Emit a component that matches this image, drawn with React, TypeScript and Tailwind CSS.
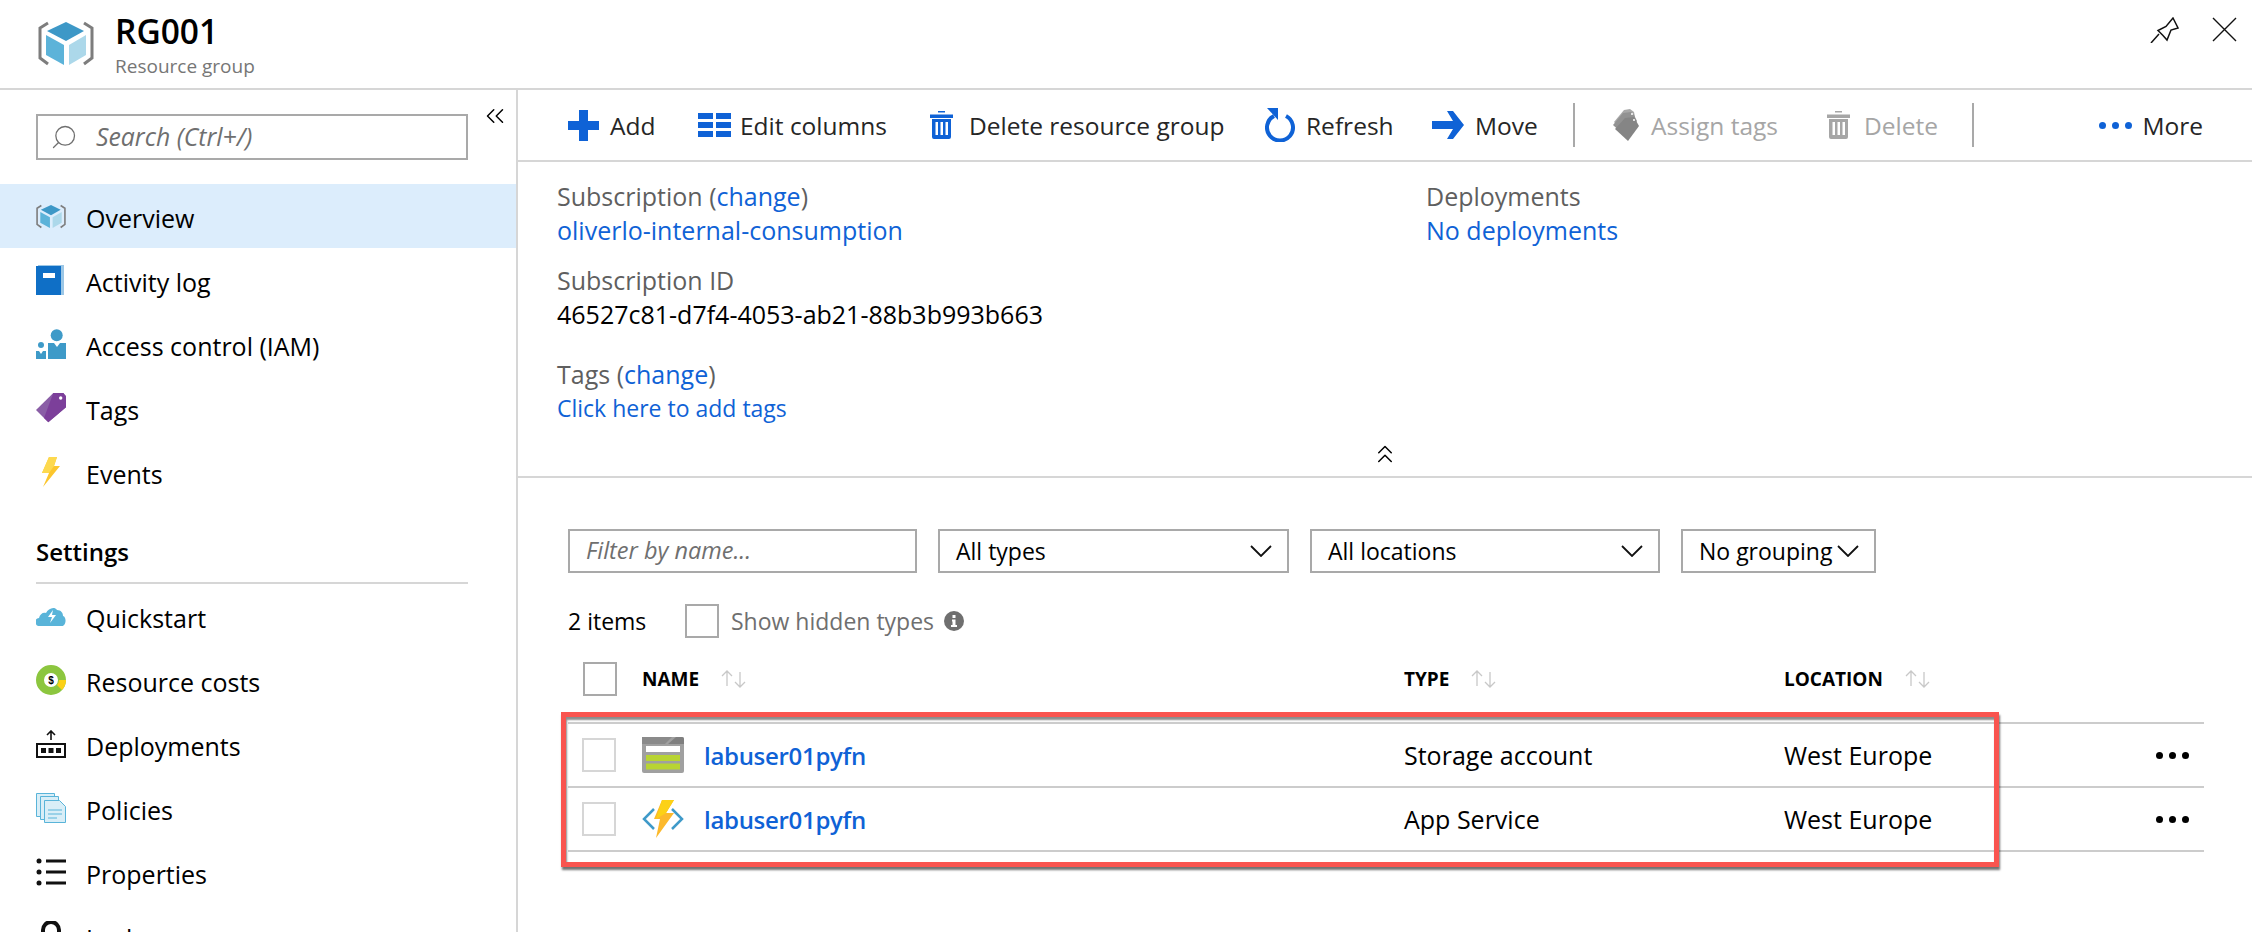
import { ChevronsLeft, ChevronsUp, Search } from "lucide-react";

const FONT = "font-['Open_Sans','Noto_Sans',sans-serif]";

function CubeIcon({ className }: { className: string }) {
  return (
    <svg className={className} viewBox="0 0 56 45">
      <path d="M10 2 2 7v30l8 6M46 2l8 5v30l-8 6" fill="none" stroke="#7d7d7d" strokeWidth="3" />
      <path d="M28 1l18 9-18 10-19-10z" fill="#3d98c7" />
      <path d="M8 14l18 10v20L8 34z" fill="#5cb3d9" />
      <path d="M48 14 31 24v20l17-10z" fill="#acd8ea" />
    </svg>
  );
}

function BookIcon() {
  return (
    <svg className="w-[28px] h-[30px]" viewBox="0 0 28 30">
      <path d="M2 0h26v30H2z" fill="#9cc7e6" />
      <path d="M0 1h25v29H0z" fill="#0f6fc6" />
      <path d="M7 8h12v5H7z" fill="#fff" />
    </svg>
  );
}

function PeopleIcon() {
  return (
    <svg className="w-[30px] h-[30px]" viewBox="0 0 30 30" fill="#3e9ac8">
      <circle cx="20.700" cy="6.300" r="6" />
      <path d="M12 14h6l3 4 3-4h6v16H12z" />
      <circle cx="5" cy="16" r="3" />
      <path d="M0 22h3l2 3 2-3h3v8H0z" />
    </svg>
  );
}

function TagIcon() {
  return (
    <svg className="w-[30px] h-[30px]" viewBox="0 0 30 30">
      <path d="M17.300 0h10l2.700 3.300v11L12.300 29.300 0 17z" fill="#8a5ea6" />
      <path d="M17.300 0h10l2.700 3.300v11L12.300 29.300 8 25z" fill="#7c3f9a" />
      <circle cx="24.700" cy="5" r="1.700" fill="#fff" />
    </svg>
  );
}

function BoltIcon() {
  return (
    <svg className="w-[18px] h-[30px] ml-[6px]" viewBox="0 0 18 30">
      <path d="M7 0h8l-3 9h6L1 30l6-14H0z" fill="#fcc62d" />
      <path d="M7 0h8l-3 9-5 7H0z" fill="#fdd94e" />
    </svg>
  );
}

function CloudIcon() {
  return (
    <svg className="w-[30px] h-[20px]" viewBox="0 0 30 20">
      <path d="M4 20a4 4 0 0 1-1-8c1-4 4-6 7-5 2-4 8-7 11-3 4 0 6 3 6 6 4 1 3 10-1 10z" fill="#59b4d9" />
      <path d="M17 4l-5 7h4l-2 6 6-8h-4z" fill="#fff" />
    </svg>
  );
}

function CostIcon() {
  return (
    <svg className="w-[30px] h-[30px]" viewBox="0 0 30 30">
      <circle cx="15" cy="15" r="11" fill="none" stroke="#8cc63f" strokeWidth="8" />
      <path d="M30 15a15 15 0 0 1-4 10l-5-5a8 8 0 0 0 2-5z" fill="#fcd116" />
      <text x="15" y="19" textAnchor="middle" fontSize="10" fontWeight="700" fontFamily="Liberation Sans">$</text>
    </svg>
  );
}

function DeployIcon() {
  return (
    <svg className="w-[30px] h-[28px]" viewBox="0 0 30 28">
      <path d="M15 10V1M11 5l4-4 4 4" fill="none" stroke="#111" strokeWidth="1.6" />
      <path d="M1 14h28v13H1z" fill="none" stroke="#111" strokeWidth="2" />
      <path d="M5 18h5v5H5zM12.500 18h5v5h-5zM20 18h5v5h-5z" fill="#111" />
    </svg>
  );
}

function PoliciesIcon() {
  return (
    <svg className="w-[30px] h-[30px]" viewBox="0 0 30 30">
      <path d="M.5.500h18v23H.5z" fill="#d9eef7" stroke="#59b4d9" />
      <path d="M4.500 3.500h18v23h-18z" fill="#d9eef7" stroke="#59b4d9" />
      <path d="M8.500 7.500h15l6 6v16h-21z" fill="#d9eef7" stroke="#59b4d9" />
      <path d="M12 17h14M12 21h14M12 25h9" stroke="#59b4d9" />
    </svg>
  );
}

function ListIcon() {
  return (
    <svg className="w-[30px] h-[28px]" viewBox="0 0 30 28">
      <circle cx="3" cy="3" r="2.500" fill="#111" />
      <circle cx="3" cy="14" r="2.500" fill="#111" />
      <circle cx="3" cy="25" r="2.500" fill="#111" />
      <path d="M10 3h20M10 14h20M10 25h20" stroke="#111" strokeWidth="3" />
    </svg>
  );
}

function LockIcon() {
  return (
    <svg className="w-[30px] h-[30px]" viewBox="0 0 30 30">
      <path d="M7 14V9a8 8 0 0 1 16 0v5" fill="none" stroke="#111" strokeWidth="4" />
      <path d="M3 14h24v16H3z" fill="#111" />
    </svg>
  );
}

function TrashIcon({ color }: { color: string }) {
  return (
    <svg className="w-[23px] h-[28px]" viewBox="0 0 23 28" fill={color}>
      <path d="M8 0h7v1.500H8zM0 3.500h23V7H0z" />
      <path d="M2 8h19v18a2 2 0 0 1-2 2H4a2 2 0 0 1-2-2zm3.500 3v13h2.500V11zm5 0v13H13V11zm5 0v13H18V11z" fillRule="evenodd" />
    </svg>
  );
}

const navTop = [
  { label: "Overview", icon: <CubeIcon className="w-[30px] h-[25px]" />, active: true },
  { label: "Activity log", icon: <BookIcon /> },
  { label: "Access control (IAM)", icon: <PeopleIcon /> },
  { label: "Tags", icon: <TagIcon /> },
  { label: "Events", icon: <BoltIcon /> },
];

const navSettings = [
  { label: "Quickstart", icon: <CloudIcon /> },
  { label: "Resource costs", icon: <CostIcon /> },
  { label: "Deployments", icon: <DeployIcon /> },
  { label: "Policies", icon: <PoliciesIcon /> },
  { label: "Properties", icon: <ListIcon /> },
  { label: "Locks", icon: <LockIcon /> },
];

function NavItem({ label, icon, active }: { label: string; icon: React.ReactNode; active?: boolean }) {
  return (
    <div className={`h-[64px] shrink-0 flex items-center pl-[36px] ${active ? "bg-[#dcedfc]" : ""}`}>
      <span className="w-[50px] shrink-0 flex items-center">{icon}</span>
      <span className="text-[25px] text-black pt-[5px]">{label}</span>
    </div>
  );
}

function ToolItem({ label, icon, width, gap, muted }: { label: string; icon: React.ReactNode; width: string; gap: string; muted?: boolean }) {
  return (
    <div className={`flex items-center shrink-0 text-[24.500px] ${width} ${gap} ${muted ? "text-[#a6a6a6]" : "text-[#262626]"}`}>
      {icon}
      <span className="pt-[2px]">{label}</span>
    </div>
  );
}

function Select({ label, width }: { label: string; width: string }) {
  return (
    <div className={`h-[44px] ${width} shrink-0 border-2 border-[#a9a9a9] flex items-center justify-between pl-[16px] pr-[15px] text-[23px] text-black`}>
      <span>{label}</span>
      <svg className="w-[22px] h-[12px] shrink-0" viewBox="0 0 22 12" fill="none" stroke="#111" strokeWidth="1.800">
        <path d="M1 1l10 10L21 1" />
      </svg>
    </div>
  );
}

function SortArrows() {
  return (
    <svg className="w-[26px] h-[18px] ml-[22px]" viewBox="0 0 26 18" fill="none" stroke="#c8c8c8" strokeWidth="1.300">
      <path d="M6 16V1M1 6l5-5 5 5M19 2v15M14 12l5 5 5-5" />
    </svg>
  );
}

function Dots({ color, size, gap }: { color: string; size: string; gap: string }) {
  return (
    <span className={`flex ${gap}`}>
      <span className={`${size} rounded-full ${color}`} />
      <span className={`${size} rounded-full ${color}`} />
      <span className={`${size} rounded-full ${color}`} />
    </span>
  );
}

function Row({ icon, type }: { icon: React.ReactNode; type: string }) {
  return (
    <div className="h-[64px] flex items-center border-b-2 border-[#cccccc]">
      <span className="w-[74px] shrink-0 pl-[14px]">
        <span className="block w-[34px] h-[34px] border-2 border-[#d6d6d6]" />
      </span>
      <span className="w-[62px] shrink-0 flex items-center">{icon}</span>
      <span className="w-[700px] shrink-0 text-[#0f62d6] font-semibold text-[24px] tracking-[-0.3px] pt-[2px]">labuser01pyfn</span>
      <span className="w-[380px] shrink-0 text-black text-[25px] pt-[2px]">{type}</span>
      <span className="flex-1 text-black text-[25px] pt-[2px]">West Europe</span>
      <span className="pr-[15px]">
        <Dots color="bg-black" size="w-[7px] h-[7px]" gap="gap-[6px]" />
      </span>
    </div>
  );
}

export default function App() {
  return (
    <div className={`relative w-[2252px] h-[932px] overflow-hidden bg-white ${FONT}`}>
      <header className="h-[90px] border-b-2 border-[#d6d6d6] flex items-start">
        <div className="pl-[38px] pt-[21px]">
          <CubeIcon className="w-[56px] h-[45px]" />
        </div>
        <div className="pl-[21px] pt-[9px]">
          <h1 className="text-[33.500px] leading-[44px] font-semibold text-black">RG001</h1>
          <p className="text-[19px] leading-[24px] text-[#767676] mt-[1px]">Resource group</p>
        </div>
        <div className="ml-auto flex items-start gap-[33px] pt-[17px] pr-[15px]">
          <svg className="w-[29px] h-[26px]" viewBox="0 0 29 26" fill="none" stroke="#111" strokeWidth="1.500">
            <path d="M1 26l8-9M23 1l5 10-7 2-4 10-4-4.500-5-5 8-4z" />
          </svg>
          <svg className="w-[25px] h-[25px]" viewBox="0 0 25 25" fill="none" stroke="#111" strokeWidth="1.400">
            <path d="M1 1l23 23M24 1L1 24" />
          </svg>
        </div>
      </header>

      <div className="flex h-[842px]">
        <aside className="w-[518px] shrink-0 border-r-2 border-[#d6d6d6] flex flex-col overflow-hidden">
          <div className="relative h-[94px] shrink-0 pt-[24px] pl-[36px]">
            <div className="w-[432px] h-[46px] border-2 border-[#a9a9a9] flex items-center pl-[12px] gap-[18px] text-[#6f6f6f] text-[24.800px] italic">
              <Search className="w-[28px] h-[28px] -scale-x-100 shrink-0" strokeWidth={1.1} />
              <span>Search (Ctrl+/)</span>
            </div>
            <ChevronsLeft className="absolute left-[480px] top-[11px] w-[30px] h-[30px] text-black" strokeWidth={1.2} />
          </div>
          {navTop.map((n) => (
            <NavItem key={n.label} {...n} />
          ))}
          <div className="h-[80px] shrink-0 mx-[36px] w-[432px] flex items-end border-b-2 border-[#d6d6d6] pb-[12px] text-[24px] font-semibold text-black">
            Settings
          </div>
          {navSettings.map((n) => (
            <NavItem key={n.label} {...n} />
          ))}
        </aside>

        <main className="flex-1 min-w-0">
          <div className="h-[72px] border-b-2 border-[#d6d6d6] flex items-center pl-[50px] pr-[49px]">
            <ToolItem
              label="Add"
              width="w-[130px]"
              gap="gap-[11px]"
              icon={
                <svg className="w-[31px] h-[31px]" viewBox="0 0 31 31" fill="#0f62d6">
                  <path d="M11 0h9v11h11v9H20v11h-9V20H0v-9h11z" />
                </svg>
              }
            />
            <ToolItem
              label="Edit columns"
              width="w-[232px]"
              gap="gap-[9px]"
              icon={
                <svg className="w-[33px] h-[24px]" viewBox="0 0 33 24" fill="#0f62d6">
                  <path d="M0 0h15v6H0zM18 0h15v6H18zM0 9h15v6H0zM18 9h15v6H18zM0 18h15v6H0zM18 18h15v6H18z" />
                </svg>
              }
            />
            <ToolItem label="Delete resource group" width="w-[334px]" gap="gap-[16px]" icon={<TrashIcon color="#0f62d6" />} />
            <ToolItem
              label="Refresh"
              width="w-[168px]"
              gap="gap-[10px]"
              icon={
                <svg className="w-[32px] h-[34px]" viewBox="0 0 32 34" fill="none">
                  <path d="M10 8a13 13 0 1 0 12 0" stroke="#0f62d6" strokeWidth="4" />
                  <path d="M3 0h11v12z" fill="#0f62d6" />
                </svg>
              }
            />
            <ToolItem
              label="Move"
              width="w-[141px]"
              gap="gap-[11px]"
              icon={
                <svg className="w-[32px] h-[28px]" viewBox="0 0 32 28" fill="#0f62d6">
                  <path d="M0 10h21L15 0h6l11 14-11 14h-6l6-10H0z" />
                </svg>
              }
            />
            <span className="w-[2px] h-[44px] bg-[#a9a9a9] mr-[38px] shrink-0" />
            <ToolItem
              label="Assign tags"
              width="w-[214px]"
              gap="gap-[12px]"
              muted
              icon={
                <svg className="w-[26px] h-[32px]" viewBox="0 0 26 32">
                  <path d="M11 1l6-1 4 3 1 5-11 15L1 13z" fill="#a8a8a8" />
                  <path d="M10 4l8-1 3 3 3 6-11 16L0 16z" fill="#929292" />
                  <path d="M12 9l9-1 5 9-11 15L2 20z" fill="#858585" />
                  <circle cx="19" cy="5" r="1" fill="#fff" />
                  <circle cx="21" cy="11" r="1" fill="#fff" />
                </svg>
              }
            />
            <ToolItem label="Delete" width="w-[145px]" gap="gap-[14px]" muted icon={<TrashIcon color="#a6a6a6" />} />
            <span className="w-[2px] h-[44px] bg-[#a9a9a9] shrink-0" />
            <div className="ml-auto flex items-center gap-[10px] text-[24.500px] text-[#262626]">
              <Dots color="bg-[#0f62d6]" size="w-[7px] h-[7px]" gap="gap-[6px]" />
              <span className="pt-[2px]">More</span>
            </div>
          </div>

          <section className="h-[316px] border-b-2 border-[#d6d6d6] pl-[39px] pt-[17px] text-[25px] leading-[34px]">
            <div className="flex">
              <div className="w-[869px] shrink-0">
                <p className="text-[#5f5f5f]">
                  Subscription (<span className="text-[#0f62d6]">change</span>)
                </p>
                <p className="text-[#0f62d6]">oliverlo-internal-consumption</p>
                <p className="text-[#5f5f5f] mt-[16px]">Subscription ID</p>
                <p className="text-black">46527c81-d7f4-4053-ab21-88b3b993b663</p>
                <p className="text-[#5f5f5f] mt-[26px]">
                  Tags (<span className="text-[#0f62d6]">change</span>)
                </p>
                <p className="text-[#0f62d6] text-[23px]">Click here to add tags</p>
              </div>
              <div>
                <p className="text-[#5f5f5f]">Deployments</p>
                <p className="text-[#0f62d6]">No deployments</p>
              </div>
            </div>
            <div className="flex justify-center pr-[39px] mt-[14px]">
              <ChevronsUp className="w-[30px] h-[30px] text-black" strokeWidth={1.2} />
            </div>
          </section>

          <div className="pl-[50px] pr-[48px] pt-[51px]">
            <div className="flex gap-[21px]">
              <div className="h-[44px] w-[349px] shrink-0 border-2 border-[#a9a9a9] flex items-center pl-[16px] text-[23.500px] italic text-[#6f6f6f]">
                Filter by name...
              </div>
              <Select label="All types" width="w-[351px]" />
              <Select label="All locations" width="w-[350px]" />
              <Select label="No grouping" width="w-[195px]" />
            </div>

            <div className="flex items-center h-[34px] mt-[31px] text-[23px]">
              <span className="w-[117px] shrink-0 text-black">2 items</span>
              <span className="w-[34px] h-[34px] shrink-0 border-2 border-[#a9a9a9]" />
              <span className="ml-[12px] text-[#6f6f6f]">Show hidden types</span>
              <svg className="w-[20px] h-[20px] ml-[10px]" viewBox="0 0 20 20">
                <circle cx="10" cy="10" r="10" fill="#6f6f6f" />
                <path d="M8.500 4h3v3h-3zM8 8.500h3.500V14H13v2H7v-2h1.500v-3.500H8z" fill="#fff" />
              </svg>
            </div>

            <div className="flex items-center h-[60px] mt-[11px] mb-[13px] text-[19px] font-bold text-black">
              <span className="w-[74px] shrink-0 pl-[15px]">
                <span className="block w-[34px] h-[34px] border-2 border-[#a9a9a9]" />
              </span>
              <span className="w-[762px] shrink-0 flex items-center">
                NAME
                <SortArrows />
              </span>
              <span className="w-[380px] shrink-0 flex items-center">
                TYPE
                <SortArrows />
              </span>
              <span className="flex items-center">
                LOCATION
                <SortArrows />
              </span>
            </div>

            <div className="border-t-2 border-[#cccccc]">
              <Row
                type="Storage account"
                icon={
                  <svg className="w-[42px] h-[36px]" viewBox="0 0 42 36">
                    <path d="M0 2a2 2 0 0 1 2-2h38a2 2 0 0 1 2 2v32a2 2 0 0 1-2 2H2a2 2 0 0 1-2-2z" fill="#a0a0a0" />
                    <path d="M34 0h6a2 2 0 0 1 2 2v5H26z" fill="#7f7f7f" />
                    <path d="M0 0h30l-7 7H0z" fill="#8a8a8a" />
                    <path d="M4 9h34v6H4z" fill="#fff" />
                    <path d="M4 18h34v6H4zM4 26.500h34v6H4z" fill="#b8d432" />
                  </svg>
                }
              />
              <Row
                type="App Service"
                icon={
                  <svg className="w-[42px] h-[38px]" viewBox="0 0 42 38">
                    <path d="M12 9 2 19l10 10M30 9l10 10-10 10" fill="none" stroke="#3f9ac9" strokeWidth="2.500" />
                    <path d="M20 0h12l-8 13h8L14 38l4-19h-6z" fill="#fcb92c" />
                    <path d="M20 0h12l-8 13-10 6z" fill="#fcd116" />
                  </svg>
                }
              />
            </div>
          </div>
        </main>
      </div>

      <div className="absolute left-[561px] top-[712px] w-[1438px] h-[155px] border-[5px] border-[#f9544f] shadow-[1px_3px_2px_rgba(0,0,0,0.55),inset_1px_3px_2px_rgba(0,0,0,0.45)]" />
    </div>
  );
}
